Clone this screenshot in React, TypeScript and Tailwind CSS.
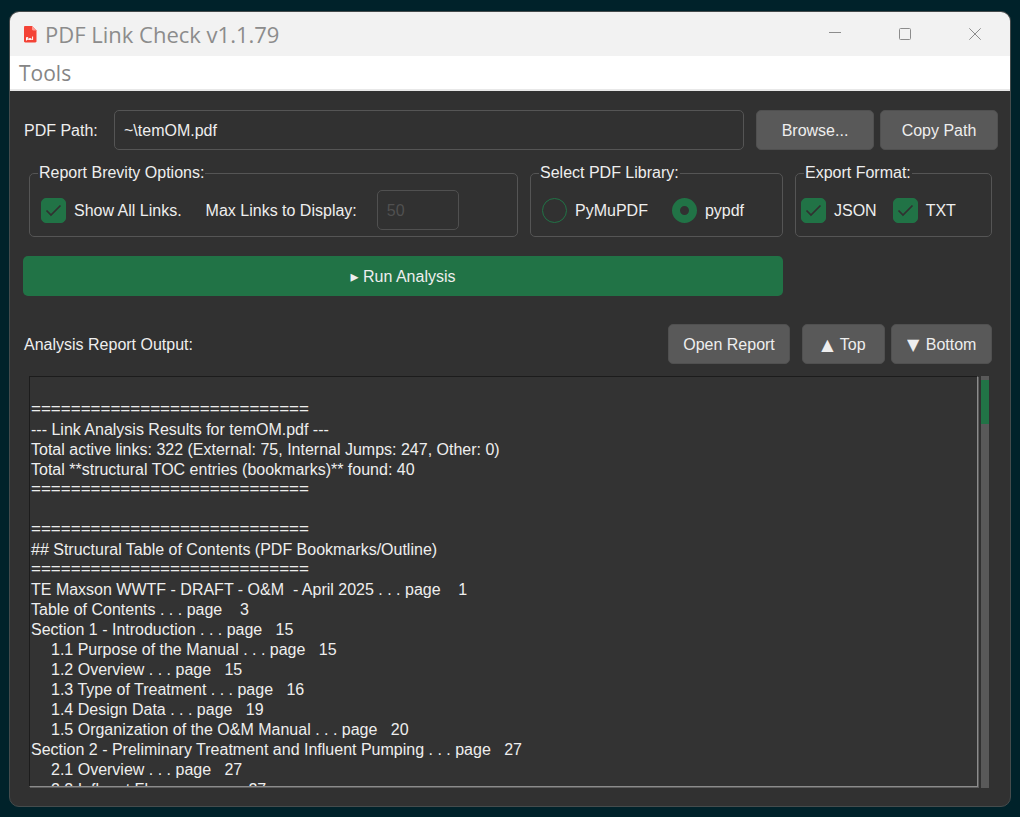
import type { ReactNode } from "react";

const RULE = "============================";

type Line = { text: string; nested?: boolean };

const REPORT: Line[] = [
  { text: "" },
  { text: RULE },
  { text: "--- Link Analysis Results for temOM.pdf ---" },
  { text: "Total active links: 322 (External: 75, Internal Jumps: 247, Other: 0)" },
  { text: "Total **structural TOC entries (bookmarks)** found: 40" },
  { text: RULE },
  { text: "" },
  { text: RULE },
  { text: "## Structural Table of Contents (PDF Bookmarks/Outline)" },
  { text: RULE },
  { text: "TE Maxson WWTF - DRAFT - O&M  - April 2025 . . . page    1" },
  { text: "Table of Contents . . . page    3" },
  { text: "Section 1 - Introduction . . . page   15" },
  { text: "1.1 Purpose of the Manual . . . page   15", nested: true },
  { text: "1.2 Overview . . . page   15", nested: true },
  { text: "1.3 Type of Treatment . . . page   16", nested: true },
  { text: "1.4 Design Data . . . page   19", nested: true },
  { text: "1.5 Organization of the O&M Manual . . . page   20", nested: true },
  { text: "Section 2 - Preliminary Treatment and Influent Pumping . . . page   27" },
  { text: "2.1 Overview . . . page   27", nested: true },
  { text: "2.2 Influent Flow . . . page   27", nested: true },
];

function lineClass(line: Line) {
  if (line.text === RULE) return "h-5 text-[17px] leading-[18px]";
  return line.nested ? "h-5 pl-5" : "h-5";
}

function PdfIcon() {
  return (
    <svg width="13" height="17" viewBox="0 0 13 17" aria-hidden="true">
      <path d="M1.2 0H8l4.500 4.400v10.900c0 .7-.5 1.200-1.200 1.200H1.200C.5 16.500 0 16 0 15.300V1.200C0 .5.5 0 1.200 0Z" fill="#f44336" />
      <path d="M8 0l4.500 4.400H9.200C8.500 4.400 8 3.900 8 3.200Z" fill="#ff9a92" />
      <path d="M2.500 14.500v-3h1.300v1.500H2.500M5.300 13.400h1.400v-1.400M5.300 13.500v-1.500M8.600 13.800v-3.300" fill="none" stroke="#fff" strokeWidth="1" />
      <path d="M2.500 13.400h6.300" stroke="#fff" strokeWidth=".8" />
    </svg>
  );
}

function Group({ title, className, children }: { title: string; className: string; children: ReactNode }) {
  return (
    <fieldset className="min-w-0 rounded-[5px] border border-[#555555]">
      <legend className="ml-2 px-px leading-5">{title}</legend>
      <div className={`flex items-center pt-[7px] pb-1.5 ${className}`}>{children}</div>
    </fieldset>
  );
}

function Check({ label }: { label: string }) {
  return (
    <label className="flex h-10 items-center gap-2 whitespace-nowrap">
      <span className="grid size-[25px] shrink-0 place-items-center">
        <input
          type="checkbox"
          defaultChecked
          className="peer col-start-1 row-start-1 size-[25px] appearance-none rounded-[5px] border border-[#217346] checked:bg-[#217346]"
        />
        <svg width="17" height="13" viewBox="0 0 17 13" aria-hidden="true" className="pointer-events-none invisible col-start-1 row-start-1 peer-checked:visible">
          <path d="M1.500 6.500l4.500 4.500L15.500 1.500" fill="none" stroke="#313131" strokeWidth="1.700" />
        </svg>
      </span>
      <span className="pt-px">{label}</span>
    </label>
  );
}

function Choice({ label, checked }: { label: string; checked?: boolean }) {
  return (
    <label className="flex h-10 items-center gap-2 whitespace-nowrap">
      <input
        type="radio"
        name="library"
        defaultChecked={checked}
        className="size-[25px] shrink-0 appearance-none rounded-full border border-[#217346] checked:border-8"
      />
      <span className="pt-px">{label}</span>
    </label>
  );
}

function PushButton({ className, children }: { className: string; children: ReactNode }) {
  return (
    <button type="button" className={`h-10 shrink-0 overflow-hidden rounded-[5px] border border-[#505050] bg-[#595959] pt-0.5 whitespace-nowrap ${className}`}>
      {children}
    </button>
  );
}

export default function App() {
  return (
    <div className="flex h-screen flex-col bg-[#00222a] px-[9px] pt-[11px] pb-2.5 font-['Liberation_Sans',Arial,sans-serif] text-base text-[#eeeeee]">
      <main className="flex min-h-0 flex-1 flex-col overflow-hidden rounded-[10px] border border-[#454b4c] bg-[#313131]">
        <header className="flex h-11 shrink-0 items-center bg-[#f2f2f2] pl-[14px] font-['Open_Sans','Noto_Sans',sans-serif] text-[#8c8c8c]">
          <PdfIcon />
          <h1 className="ml-2 flex-1 text-[22px] leading-8 whitespace-nowrap">PDF Link Check v1.1.79</h1>
          <button type="button" aria-label="Minimize" className="grid h-11 w-[70px] place-items-center">
            <svg width="12" height="12" viewBox="0 0 12 12" aria-hidden="true">
              <path d="M0 4.500h12" stroke="#8c8c8c" />
            </svg>
          </button>
          <button type="button" aria-label="Maximize" className="grid h-11 w-[70px] place-items-center">
            <svg width="12" height="12" viewBox="0 0 12 12" aria-hidden="true">
              <rect x=".5" y=".5" width="11" height="11" rx="1" fill="none" stroke="#8c8c8c" />
            </svg>
          </button>
          <button type="button" aria-label="Close" className="grid h-11 w-[70px] place-items-center">
            <svg width="12" height="12" viewBox="0 0 12 12" aria-hidden="true">
              <path d="M.3.3l11.400 11.400M11.700.3L.3 11.700" stroke="#8c8c8c" />
            </svg>
          </button>
        </header>
        <nav className="flex h-[35px] shrink-0 items-center border-b-2 border-[#e8e8e8] bg-white pt-px pl-[9px] font-['Open_Sans','Noto_Sans',sans-serif] text-[21px] leading-8 text-[#858585]">
          <button type="button">Tools</button>
        </nav>

        <div className="flex min-h-0 flex-1 flex-col pt-[19px] pr-3 pb-[18px] pl-[13px]">
          <div className="flex items-center">
            <label htmlFor="path" className="w-[91px] shrink-0 pt-0.5 pl-px">PDF Path:</label>
            <input
              id="path"
              type="text"
              defaultValue="~\temOM.pdf"
              className="h-10 min-w-0 flex-1 rounded-[5px] border border-[#555555] bg-transparent px-[9px] pt-0.5"
            />
            <PushButton className="ml-3 w-[118px]">Browse...</PushButton>
            <PushButton className="ml-1.5 w-[118px]">Copy Path</PushButton>
          </div>

          <div className="mx-1.5 mt-[13px] grid grid-cols-[minmax(0,1fr)_253px_197px] gap-x-3">
            <Group title="Report Brevity Options:" className="pl-[11px]">
              <Check label="Show All Links." />
              <label htmlFor="max" className="ml-6 pt-px whitespace-nowrap">Max Links to Display:</label>
              <input
                id="max"
                type="text"
                disabled
                defaultValue="50"
                className="ml-5 h-10 w-[82px] rounded-[5px] border border-[#505050] bg-transparent px-[9px] pt-0.5 text-[#505050]"
              />
            </Group>
            <Group title="Select PDF Library:" className="gap-6 pl-[11px]">
              <Choice label="PyMuPDF" />
              <Choice label="pypdf" checked />
            </Group>
            <Group title="Export Format:" className="gap-4 pl-[5px]">
              <Check label="JSON" />
              <Check label="TXT" />
            </Group>
          </div>

          <button type="button" className="mt-[19px] mr-[215px] h-10 shrink-0 rounded-[5px] bg-[#217346] pt-0.5">
            <span className="font-['DejaVu_Sans',sans-serif]">▸</span> Run Analysis
          </button>

          <div className="mt-7 flex items-center pr-1.5">
            <h2 className="flex-1 pt-0.5 pl-px">Analysis Report Output:</h2>
            <PushButton className="w-[122px]">Open Report</PushButton>
            <PushButton className="ml-3 w-[83px]">
              <span className="mr-0.5 font-['DejaVu_Sans',sans-serif]">▲</span> Top
            </PushButton>
            <PushButton className="ml-1.5 w-[101px] px-[15px]">
              <span className="block overflow-hidden text-left">
                <span className="mr-0.5 font-['DejaVu_Sans',sans-serif]">▼</span> Bottom
              </span>
            </PushButton>
          </div>

          <div className="mt-3 mr-[9px] ml-1.5 flex min-h-0 flex-1 gap-[3px]">
            <div
              role="log"
              aria-label="Analysis Report Output"
              tabIndex={0}
              className="mb-px min-w-0 flex-1 overflow-hidden border border-t-[#1c1c1c] border-r-[#8c8c8c] border-b-[#8c8c8c] border-l-[#1c1c1c] bg-[#333333] pt-[3px] pl-px leading-5 whitespace-pre shadow-[1px_1px_0_#5c5c5c]"
            >
              {REPORT.map((line, i) => (
                <div key={i} className={lineClass(line)}>{line.text}</div>
              ))}
            </div>
            <div className="w-2 shrink-0 bg-[#595959] pt-1">
              <div className="h-11 bg-[#217346]" />
            </div>
          </div>
        </div>
      </main>
    </div>
  );
}
